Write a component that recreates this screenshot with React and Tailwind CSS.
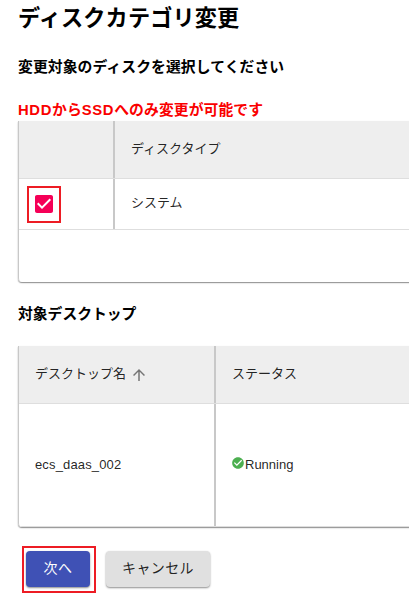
import React from 'react';

const CELL_TEXT = 'text-[13px] leading-5 text-black/87';

function DiskTable() {
  return (
    <div className="h-[161px] w-[420px] shrink-0 overflow-hidden rounded-b-[4px] border-l border-[#c8c8c8] bg-white">
      <div className="flex h-[58px] border-b border-[#dedede] bg-[#eeeeee]">
        <div className="w-[94px] shrink-0" />
        <div className={`flex flex-1 items-center border-l-2 border-[#c8c8c8] pl-4 ${CELL_TEXT}`}>
          <span className="-translate-y-px whitespace-nowrap">ディスクタイプ</span>
        </div>
      </div>
      <div className="flex h-[51px] border-b border-[#dedede]">
        <div className="w-[94px] shrink-0 pl-2 pt-[7px]">
          <div className="flex h-[37px] w-[34px] items-start justify-center border-2 border-[#ed1c24] pt-1">
            <svg className="block h-6 w-6 shrink-0" viewBox="0 0 24 24" fill="#f50057">
              <path d="M19 3H5c-1.11 0-2 .9-2 2v14c0 1.1.89 2 2 2h14c1.11 0 2-.9 2-2V5c0-1.1-.89-2-2-2zm-9 14l-5-5 1.41-1.41L10 14.17l7.59-7.59L19 8l-9 9z" />
            </svg>
          </div>
        </div>
        <div className={`flex flex-1 items-center border-l-2 border-[#c8c8c8] pl-4 ${CELL_TEXT}`}>
          <span className="-translate-y-px whitespace-nowrap">システム</span>
        </div>
      </div>
    </div>
  );
}

function DesktopTable() {
  return (
    <div className="h-[181px] w-[420px] overflow-hidden rounded-b-[4px] border-l border-[#c8c8c8] bg-white">
      <div className="flex h-[58px] border-b border-[#dedede] bg-[#eeeeee]">
        <div className={`flex w-[195px] shrink-0 items-center pl-4 ${CELL_TEXT}`}>
          <span className="-translate-y-px whitespace-nowrap">デスクトップ名</span>
          <svg className="ml-1 h-[18px] w-[18px]" viewBox="0 0 24 24" fill="#757575">
            <path d="M4 12l1.41 1.41L11 7.83V20h2V7.83l5.58 5.59L20 12l-8-8-8 8z" />
          </svg>
        </div>
        <div className={`flex flex-1 items-center border-l-2 border-[#c8c8c8] pl-4 ${CELL_TEXT}`}>
          <span className="-translate-y-px whitespace-nowrap">ステータス</span>
        </div>
      </div>
      <div className="flex h-[123px] border-b border-[#dedede]">
        <div className={`flex w-[195px] shrink-0 items-center pl-4 ${CELL_TEXT}`}>
          <span className="tracking-[0.14px]">ecs_daas_002</span>
        </div>
        <div className={`flex flex-1 items-center border-l-2 border-[#c8c8c8] pl-[15px] ${CELL_TEXT}`}>
          <svg className="mb-[4px] h-[14px] w-[14px]" viewBox="0 0 24 24" fill="#4caf50">
            <path d="M12 2C6.48 2 2 6.48 2 12s4.48 10 10 10 10-4.48 10-10S17.52 2 12 2zm-2 15l-5-5 1.41-1.41L10 14.17l7.59-7.59L19 8l-9 9z" />
          </svg>
          <span>Running</span>
        </div>
      </div>
    </div>
  );
}

export default function App() {
  return (
    <main className="h-[605px] w-[409px] overflow-hidden bg-white pl-[18px] font-['Liberation_Sans','Noto_Sans_CJK_JP',sans-serif] text-black">
      <h1 className="h-[55px] whitespace-nowrap pt-[3px] text-[22.2px] leading-8 font-bold tracking-[0.1px]">ディスクカテゴリ変更</h1>
      <h2 className="h-[43px] whitespace-nowrap text-[14.8px] leading-6 font-bold tracking-[0.1px]">変更対象のディスクを選択してください</h2>
      <p className="h-[23px] whitespace-nowrap text-[14.8px] leading-6 font-bold tracking-[0.1px] text-[#fa0000]">
        <span className="tracking-[0.65px]">HDD</span>から<span className="tracking-[0.65px]">SSD</span>へのみ変更が可能です
      </p>
      <div className="w-[420px] rounded-b-[4px] shadow-[0_1px_1px_rgba(0,0,0,0.35),0_1px_2px_rgba(0,0,0,0.15)]">
        <DiskTable />
      </div>
      <h2 className="mt-5 h-[44px] whitespace-nowrap text-[14.8px] leading-6 font-bold">対象デスクトップ</h2>
      <div className="w-[420px] rounded-b-[4px] shadow-[0_1px_1px_rgba(0,0,0,0.35),0_1px_2px_rgba(0,0,0,0.15)]">
        <DesktopTable />
      </div>
      <div className="mt-[19px] ml-1 flex items-start gap-[10px]">
        <div className="flex h-[47px] w-[74px] items-start border-2 border-[#ed1c24] pl-0.5 pt-[3px]">
          <button className="h-9 w-16 rounded-[4px] bg-[#3f51b5] pb-0.5 text-[14px] tracking-[0.4px] text-white shadow-[0_1px_2px_rgba(0,0,0,0.45)]">次へ</button>
        </div>
        <button className="mt-[5px] h-9 w-[104px] rounded-[4px] bg-[#e0e0e0] pb-0.5 text-[14px] tracking-[0.4px] text-black/87 shadow-[0_1px_2px_rgba(0,0,0,0.45)]">キャンセル</button>
      </div>
    </main>
  );
}
